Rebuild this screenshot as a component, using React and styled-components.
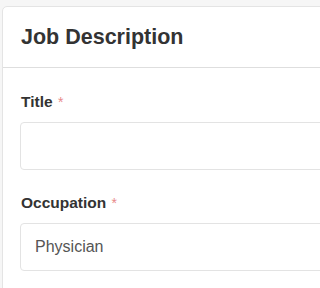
import React from 'react'
import styled, { createGlobalStyle } from 'styled-components'

const GlobalStyle = createGlobalStyle`
  html, body {
    margin: 0;
    background: #f6f6f6;
    font-family: 'Liberation Sans', Arial, sans-serif;
    overflow: hidden;
  }
`

const fields = [
  { label: 'Title', value: '' },
  { label: 'Occupation', value: 'Physician' },
]

const App = () => {
  return (
    <>
      <GlobalStyle />
      <Page>
        <StyledCard>
          <CardHeader>
            <h2>Job Description</h2>
          </CardHeader>
          <CardBody>
            {fields.map(({ label, value }) => (
              <Field key={label}>
                <Label>
                  {label} <Required>*</Required>
                </Label>
                <Input type="text" defaultValue={value} />
              </Field>
            ))}
          </CardBody>
        </StyledCard>
      </Page>
    </>
  )
}

const Page = styled.div`
  width: 100vw;
  height: 100vh;
  overflow: hidden;
  box-sizing: border-box;
  padding: 6px 0 0 2px;
`

const StyledCard = styled.div`
  width: calc(100% + 40px);
  background: #fff;
  border: 1px solid #e4e4e4;
  border-radius: 5px;
`

const CardHeader = styled.div`
  display: flex;
  align-items: center;
  height: 60px;
  padding: 0 18px;
  border-bottom: 1px solid #dedede;

  h2 {
    margin: 0;
    font-size: 21.5px;
    font-weight: 700;
    color: #333;
  }
`

const CardBody = styled.div`
  display: flex;
  flex-direction: column;
  gap: 23px;
  padding: 24px 17px;
`

const Field = styled.div`
  display: flex;
  flex-direction: column;
  gap: 10px;
`

const Label = styled.label`
  padding-left: 1px;
  font-size: 15.5px;
  line-height: 20px;
  font-weight: 700;
  color: #333;
`

const Required = styled.span`
  margin-left: 1px;
  font-size: 14px;
  color: #e88a8a;
  font-weight: 400;
`

const Input = styled.input`
  box-sizing: border-box;
  height: 48px;
  width: 100%;
  padding: 0 14px;
  border: 1px solid #e3e3e3;
  border-radius: 4px;
  font-family: inherit;
  font-size: 16px;
  color: #555;
  outline: none;
`

export default App
